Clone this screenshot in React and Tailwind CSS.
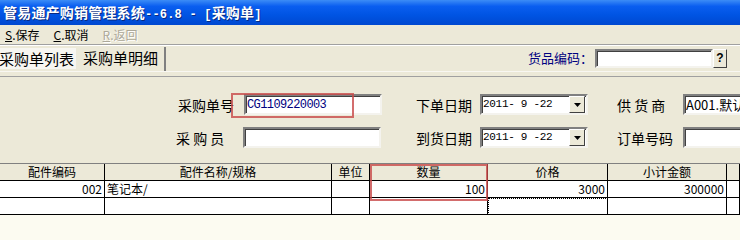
import React from "react";

const sunken =
  "shrink-0 bg-white border-2 border-t-[#808080] border-l-[#808080] border-r-[#f4f3ee] border-b-[#f4f3ee] shadow-[inset_1px_1px_0_#404040]";

function DateBox({ value }) {
  return (
    <div className={`${sunken} w-[108px] h-[21px] flex items-center`}>
      <span className="pl-[1px] text-[11px] font-['Liberation_Mono',monospace] tracking-[-0.3px] text-black flex-1">{value}</span>
      <div className="w-[16px] h-[17px] bg-[#ece9d8] border border-t-white border-l-white border-r-[#404040] border-b-[#404040] flex items-center justify-center mr-[1px]">
        <svg width="7" height="4" viewBox="0 0 7 4"><path d="M0 0h7L3.5 4z" fill="#000" /></svg>
      </div>
    </div>
  );
}

function Label({ children, w = "w-[66px]" }) {
  return <div className={`${w} shrink-0 text-[14px] text-black leading-none`}>{children}</div>;
}

const cols = "grid grid-cols-[105px_227px_38px_118px_120px_119px_1fr]";
const cell = "h-[17px] border-r border-b border-black text-[12px] leading-[16px] px-[2px] overflow-hidden whitespace-nowrap";

export default function App() {
  const headers = ["配件编码", "配件名称/规格", "单位", "数量", "价格", "小计金额", ""];
  const row1 = [
    { t: "002", r: true },
    { t: "笔记本/" },
    { t: "" },
    { t: "100", r: true },
    { t: "3000", r: true },
    { t: "300000", r: true },
    { t: "" },
  ];
  return (
    <div className="w-[740px] h-[240px] overflow-hidden bg-[#ece9d8] font-['Noto_Sans_CJK_SC','Noto_Sans',sans-serif] flex flex-col relative">
      {/* title bar */}
      <div className="h-[25px] shrink-0 bg-[linear-gradient(#3c8cf6_0%,#0a5ef0_25%,#0054e3_60%,#0048d0_100%)] flex items-center pl-[3px]">
        <span className="text-white font-bold text-[14px] tracking-[0.2px] [text-shadow:1px_1px_0_#0a2a80] whitespace-pre">
          管易通产购销管理系统<span className="font-['Liberation_Mono',monospace] text-[12px]">--6.8 - [</span>采购单<span className="font-['Liberation_Mono',monospace] text-[12px]">]</span>
        </span>
      </div>

      {/* menu bar */}
      <div className="h-[19px] shrink-0 flex items-center gap-[14px] pl-[5px] text-[12px] text-black">
        <span><u>S</u>.保存</span>
        <span><u>C</u>.取消</span>
        <span className="text-[#aca899] [text-shadow:1px_1px_0_#fff]"><u>R</u>.返回</span>
      </div>

      {/* tab row */}
      <div className="h-[27px] shrink-0 border-t border-t-[#a0a0a0] shadow-[inset_0_1px_0_#fff] flex items-stretch">
        <div className="ml-[-3px] mt-[3px] mb-[2px] px-[2px] bg-[#f7f6f1] text-[15px] leading-[21px] text-black whitespace-nowrap">采购单列表</div>
        <div className="ml-[3px] mt-[2px] pl-[4px] pr-[6px] border-r-2 border-r-[#808080] text-[15px] leading-[22px] text-black whitespace-nowrap">采购单明细</div>
        <div className="flex-1 flex items-center justify-end pr-[13px]">
          <span className="text-[13px] text-[#000080] mr-[2px]">货品编码：</span>
          <div className={`${sunken} w-[118px] h-[19px]`} />
          <div className="w-[14px] h-[19px] bg-[#ece9d8] border border-t-white border-l-white border-r-[#404040] border-b-[#404040] flex items-center justify-center text-[12px] font-bold font-['Liberation_Sans',sans-serif]">?</div>
        </div>
      </div>

      {/* form */}
      <div className="h-[92px] shrink-0 border-t border-t-[#f8f7f2] relative">
        <div className="h-[5px] border-b border-b-[#a0a0a0]" />
        <div className="flex items-center mt-[17px] h-[21px]">
          <div className="w-[178px] shrink-0" />
          <Label>采购单号</Label>
          <div className={`${sunken} w-[138px] h-[21px] flex items-center`}>
            <span className="pl-[1px] text-[12px] text-[#000080] font-['Liberation_Mono',monospace] tracking-[-0.6px]">CG1109220003</span>
          </div>
          <div className="w-[34px] shrink-0" />
          <Label w="w-[64px]">下单日期</Label>
          <DateBox value="2011- 9 -22" />
          <div className="w-[29px] shrink-0" />
          <Label>供&nbsp;货&nbsp;商</Label>
          <div className={`${sunken} w-[80px] h-[21px] flex items-center`}>
            <span className="pl-[1px] text-[13px] text-black whitespace-nowrap">A001.默认</span>
          </div>
        </div>
        <div className="flex items-center mt-[12px] h-[21px]">
          <div className="w-[176px] shrink-0" />
          <Label w="w-[67px]">采&nbsp;购&nbsp;员</Label>
          <div className={`${sunken} w-[138px] h-[21px]`} />
          <div className="w-[35px] shrink-0" />
          <Label w="w-[64px]">到货日期</Label>
          <DateBox value="2011- 9 -22" />
          <div className="w-[29px] shrink-0" />
          <Label>订单号码</Label>
          <div className={`${sunken} w-[80px] h-[21px]`} />
        </div>
        <div className="absolute z-10 left-[231px] top-[21px] w-[123px] h-[25px] border-2 border-solid border-[#c84848]/80" />
      </div>

      {/* grid */}
      <div className="flex-1 bg-[#fcfbf1] border-t border-t-[#808080] relative">
        <div className={cols}>
          {headers.map((h, i) => (
            <div key={i} className={`${cell} bg-[#ece9d8] text-center`}>{h}</div>
          ))}
          {row1.map((c, i) => (
            <div key={i} className={`${cell} bg-white ${c.r ? "text-right" : "text-left"}`}>{c.t}</div>
          ))}
          {headers.map((_, i) => (
            <div key={i} className={`${cell} bg-white ${i === 4 ? "outline outline-1 outline-dotted outline-black -outline-offset-1" : ""}`} />
          ))}
        </div>
        <div className="absolute left-[370px] top-0 w-[118px] h-[37px] border-2 border-[#c84848]/80" />
      </div>
    </div>
  );
}
